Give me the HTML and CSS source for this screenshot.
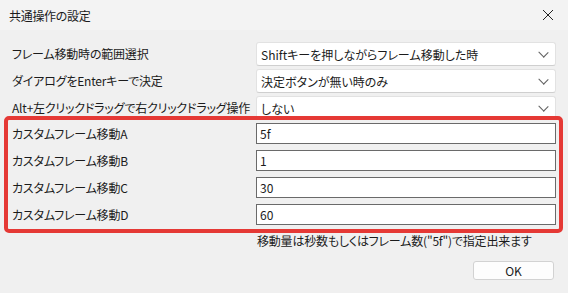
FILE: index.html
```html
<!DOCTYPE html>
<html lang="ja">
<head>
  <meta charset="UTF-8" />
  <meta name="viewport" content="width=device-width, initial-scale=1.0"/>
  <title>共通操作の設定</title>
  <link rel="stylesheet" href="styles.css">
</head>
<body>
  <div class="titlebar">
    <span class="title">共通操作の設定</span>
    <span class="close">
      <svg width="12" height="12" viewBox="0 0 12 12"><path d="M1 1L11 11M11 1L1 11" stroke="#222" stroke-width="1"/></svg>
    </span>
  </div>

  <div class="content">
    <div class="rows">
      <div class="row">
        <label class="label">フレーム移動時の範囲選択</label>
        <div class="combo"><span>Shiftキーを押しながらフレーム移動した時</span><i class="chev"></i></div>
      </div>
      <div class="row">
        <label class="label">ダイアログをEnterキーで決定</label>
        <div class="combo"><span>決定ボタンが無い時のみ</span><i class="chev"></i></div>
      </div>
      <div class="row">
        <label class="label">Alt+左クリックドラッグで右クリックドラッグ操作</label>
        <div class="combo"><span>しない</span><i class="chev"></i></div>
      </div>
      <div class="row">
        <label class="label short">カスタムフレーム移動A</label>
        <input class="field" type="text" value="5f">
      </div>
      <div class="row">
        <label class="label short">カスタムフレーム移動B</label>
        <input class="field" type="text" value="1">
      </div>
      <div class="row">
        <label class="label short">カスタムフレーム移動C</label>
        <input class="field" type="text" value="30">
      </div>
      <div class="row">
        <label class="label short">カスタムフレーム移動D</label>
        <input class="field" type="text" value="60">
      </div>

      <!-- annotation highlight -->
      <div class="highlight"></div>
    </div>

    <p class="hint">移動量は秒数もしくはフレーム数("5f")で指定出来ます</p>

    <div class="actions">
      <button class="ok">OK</button>
    </div>
  </div>
</body>
</html>
```

FILE: styles.css
```css
body {
  margin: 0;
  background: #f0f0f0;
  font-family: "Noto Sans CJK JP", "Noto Sans", sans-serif;
  font-feature-settings: "palt";
  font-size: 12px;
  color: #1b1b1b;
  width: 568px;
  height: 293px;
  overflow: hidden;
}

.titlebar {
  height: 30px;
  background: #f3f3f3;
  display: flex;
  align-items: center;
  justify-content: space-between;
  padding: 0 0 0 9px;
}
.title {
  font-size: 12px;
  letter-spacing: -0.3px;
}
.close {
  width: 40px;
  height: 30px;
  display: flex;
  align-items: center;
  justify-content: center;
}

.content {
  padding: 12px 0 0 12px;
}

.rows {
  position: relative;
  width: 544px;
}
.row {
  display: flex;
  align-items: flex-start;
  height: 27px;
}
.label {
  width: 244px;
  height: 24px;
  line-height: 24px;
  white-space: nowrap;
  letter-spacing: -0.2px;
}
.label.short {
  height: 21px;
  line-height: 21px;
}

.combo {
  box-sizing: border-box;
  width: 300px;
  height: 24px;
  background: #fff;
  border: 1px solid #e2e2e2;
  border-bottom-color: #cfcfcf;
  border-radius: 3px;
  display: flex;
  align-items: center;
  justify-content: space-between;
  padding: 0 8px 0 4px;
}
.chev {
  width: 6px;
  height: 6px;
  border-right: 1px solid #606060;
  border-bottom: 1px solid #606060;
  transform: rotate(45deg) scaleX(1.1);
  margin-top: -4px;
}

.field {
  box-sizing: border-box;
  width: 300px;
  height: 21px;
  border: 1px solid #6a6a6a;
  background: #fff;
  padding: 0 3px;
  margin: 0;
  font: inherit;
  color: #1b1b1b;
  outline: none;
}

.highlight {
  position: absolute;
  left: -8px;
  top: 74px;
  width: 551px;
  height: 109px;
  border: 4px solid #e53935;
  border-radius: 5px;
  pointer-events: none;
}

.hint {
  margin: 2px 0 0 245px;
  line-height: 16px;
  letter-spacing: -0.2px;
}

.actions {
  display: flex;
  justify-content: flex-end;
  width: 542px;
  margin-top: 12px;
}
.ok {
  width: 81px;
  height: 19px;
  background: #fdfdfd;
  border: 1px solid #d2d2d2;
  border-radius: 3px;
  font: inherit;
  font-size: 12px;
  color: #1b1b1b;
  padding: 0;
}
```
